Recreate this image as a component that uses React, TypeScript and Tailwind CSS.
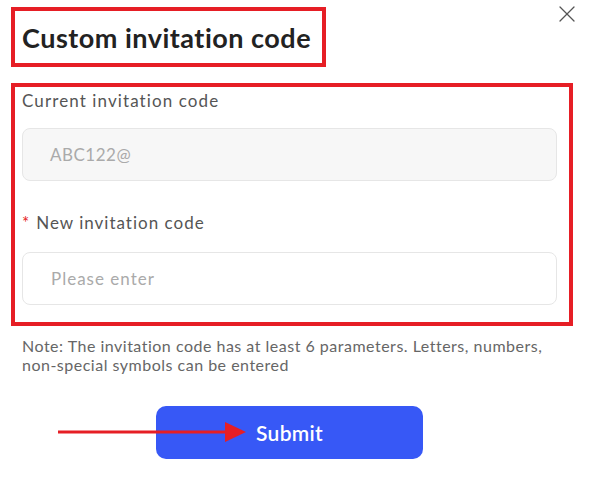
import { X } from "lucide-react";

const App = () => {
  return (
    <div className="relative w-[591px] h-[477px] bg-white font-['Lato','Liberation_Sans',sans-serif] overflow-hidden">
      {/* close */}
      <button className="absolute left-[553px] top-0 text-[#555]">
        <X size={28} strokeWidth={1.1} />
      </button>

      {/* title */}
      <div className="ml-[11px] mt-[7px] w-[315px] h-[60px] border-4 border-[#e61e25] flex items-center pl-[7px]">
        <h2 className="text-[27px] font-bold text-[#222] leading-none tracking-[0.5px]">Custom invitation code</h2>
      </div>

      {/* form */}
      <div className="ml-[11px] mt-[16px] w-[562px] h-[243px] border-4 border-[#e61e25] pl-[7px] pr-[12px] pt-[2px]">
        <label className="block text-[17px] leading-[24px] tracking-[1.1px] text-[#555]">Current invitation code</label>
        <div className="mt-[15px] h-[53px] rounded-[8px] border border-[#e6e6e6] bg-[#f7f7f7] flex items-center pl-[27px] text-[17px] tracking-[0.5px] text-[#aaa]">
          ABC122@
        </div>

        <label className="block mt-[30px] text-[17px] leading-[24px] tracking-[1px] text-[#555]">
          <span className="text-[#e61e25] mr-[6px]">*</span>New invitation code
        </label>
        <div className="mt-[17px] h-[53px] rounded-[8px] border border-[#e6e6e6] bg-white flex items-center pl-[28px] text-[17px] tracking-[1px] text-[#aaa]">
          Please enter
        </div>
      </div>

      {/* note */}
      <p className="ml-[22px] mt-[10px] w-[525px] text-[16px] leading-[19px] tracking-[0.5px] text-[#666]">
        Note: The invitation code has at least 6 parameters. Letters, numbers, non-special symbols can be entered
      </p>

      {/* submit */}
      <div className="relative">
        <button className="ml-[156px] mt-[32px] w-[267px] h-[53px] rounded-[10px] bg-[#3758f6] text-white text-[21px] font-semibold tracking-[0.3px]">
          Submit
        </button>
        <svg className="absolute left-[56px] top-[47px]" width="192" height="22" viewBox="0 0 192 22">
          <rect x="2" y="9.5" width="170" height="3" fill="#e61e25" />
          <polygon points="169,1 190,11 169,21" fill="#e61e25" />
        </svg>
      </div>
    </div>
  );
};

export default App;
